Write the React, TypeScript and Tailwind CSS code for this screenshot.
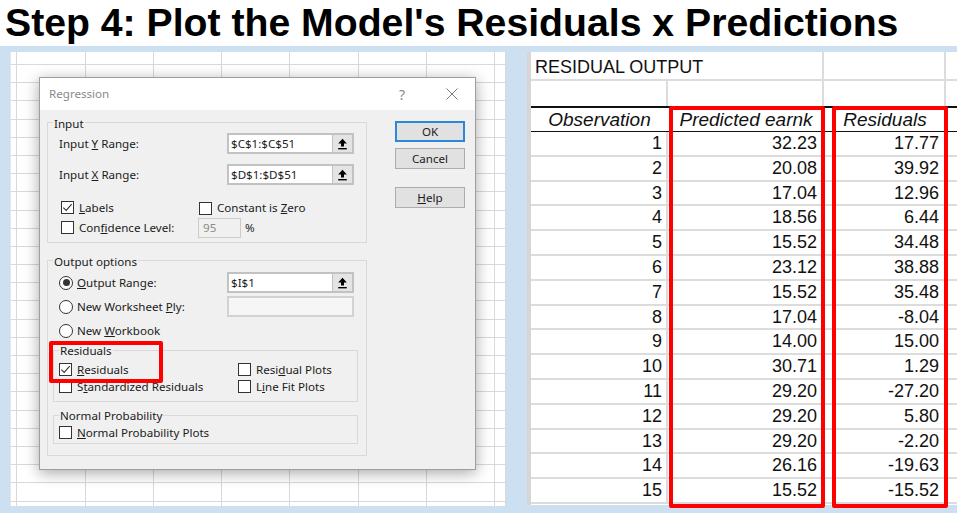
import React from 'react';

const predicted = ["32.23","20.08","17.04","18.56","15.52","23.12","15.52","17.04","14.00","30.71","29.20","29.20","29.20","26.16","15.52"];
const residuals = ["17.77","39.92","12.96","6.44","34.48","38.88","35.48","-8.04","15.00","1.29","-27.20","5.80","-2.20","-19.63","-15.52"];

function Check({ checked }: { checked?: boolean }) {
  return (
    <span className="w-[13px] h-[13px] border border-[#333] bg-white flex items-center justify-center shrink-0">
      {checked && (
        <svg width="11" height="11" viewBox="0 0 11 11">
          <path d="M1.3 5.6 L4.2 8.4 L9.7 2.2" fill="none" stroke="#333" strokeWidth="1.1" />
        </svg>
      )}
    </span>
  );
}

function Radio({ checked }: { checked?: boolean }) {
  return (
    <span className="w-[14px] h-[14px] rounded-full border border-[#333] bg-white flex items-center justify-center shrink-0">
      {checked && <span className="w-[7px] h-[7px] rounded-full bg-[#333]" />}
    </span>
  );
}

function UpArrow() {
  return (
    <svg width="11" height="12" viewBox="0 0 11 12">
      <path d="M5.5 0.8 L9.8 5.4 L7 5.4 L7 8.6 L4 8.6 L4 5.4 L1.2 5.4 Z" fill="#000" />
      <rect x="1.2" y="10" width="8.6" height="1.4" fill="#000" />
    </svg>
  );
}

function RefEdit({ value, disabled }: { value?: string; disabled?: boolean }) {
  return (
    <div className={disabled ? "h-[21px] w-[127px] flex border-2 border-[#d2d2d2] bg-[#f6f6f6]" : "h-[21px] w-[127px] flex border-2 border-[#c2c2c2] bg-white"}>
      <span className="flex-1 pl-[2px] leading-[17px] text-[11.6px] text-[#1b1b1b]">{value}</span>
      {!disabled && (
        <span className="w-[20px] bg-[#e4e4e4] border-l border-[#c2c2c2] flex items-center justify-center">
          <UpArrow />
        </span>
      )}
    </div>
  );
}

function Group({ label, className, labelClass, children }: { label: string; className: string; labelClass: string; children: React.ReactNode }) {
  return (
    <div className={"relative border border-[#d9d9d9] " + className}>
      <span className={"absolute left-[5px] px-[1px] bg-[#f0f0f0] leading-[16px] whitespace-nowrap " + labelClass}>{label}</span>
      {children}
    </div>
  );
}

function Btn({ children, primary, className }: { children: React.ReactNode; primary?: boolean; className: string }) {
  return (
    <div className={(primary ? "border-2 border-[#2b87da] " : "border border-[#adadad] ") + "w-[70px] h-[21px] bg-[#e1e1e1] flex items-center justify-center " + className}>
      {children}
    </div>
  );
}

function Dialog() {
  return (
    <div className="absolute left-[28px] top-[25px] w-[437px] h-[393px] bg-[#f0f0f0] border border-[#9e9e9e] shadow-[0_3px_14px_rgba(0,0,0,0.35)] flex flex-col font-['Noto_Sans','Open_Sans',sans-serif] text-[11.6px] text-[#1b1b1b]">
      <div className="h-[32px] bg-white flex items-center pl-[9px] pr-[17px] shrink-0">
        <span className="text-[#8a8a8a]">Regression</span>
        <span className="ml-auto text-[#8a8a8a] text-[14px] mr-[41px]">?</span>
        <svg width="12" height="12" viewBox="0 0 12 12">
          <path d="M0.5 0.5L11.5 11.5M11.5 0.5L0.5 11.5" stroke="#7a7a7a" strokeWidth="1" />
        </svg>
      </div>
      <div className="flex pl-[7px]">
        <div className="w-[320px] flex flex-col">
          <Group label="Input" className="w-[320px] h-[121px] mt-[12px]" labelClass="top-[-7px]">
            <div className="flex flex-col pt-[10px]">
              <div className="flex items-center h-[21px] pl-[11px]">
                <span className="w-[168px]">Input <u>Y</u> Range:</span>
                <RefEdit value="$C$1:$C$51" />
              </div>
              <div className="flex items-center h-[21px] pl-[11px] mt-[10px]">
                <span className="w-[168px]">Input <u>X</u> Range:</span>
                <RefEdit value="$D$1:$D$51" />
              </div>
              <div className="flex items-center h-[20px] pl-[13px] mt-[13px]">
                <div className="w-[138px] flex items-center">
                  <Check checked />
                  <span className="ml-[5px]"><u>L</u>abels</span>
                </div>
                <Check />
                <span className="ml-[5px]">Constant is <u>Z</u>ero</span>
              </div>
              <div className="flex items-center h-[20px] pl-[13px]">
                <div className="w-[137px] flex items-center">
                  <Check />
                  <span className="ml-[5px]">Con<u>f</u>idence Level:</span>
                </div>
                <div className="w-[43px] h-[20px] border border-[#cccccc] bg-[#f0f0f0] text-[#8a8a8a] pl-[4px] leading-[18px]">95</div>
                <span className="ml-[4px]">%</span>
              </div>
            </div>
          </Group>
          <Group label="Output options" className="w-[320px] h-[196px] mt-[17px]" labelClass="top-[-7px]">
            <div className="flex flex-col pt-[11px]">
              <div className="flex items-center h-[21px] pl-[11px]">
                <Radio checked />
                <span className="ml-[4px] w-[150px]"><u>O</u>utput Range:</span>
                <RefEdit value="$I$1" />
              </div>
              <div className="flex items-center h-[21px] pl-[11px] mt-[3px]">
                <Radio />
                <span className="ml-[4px] w-[150px]">New Worksheet <u>P</u>ly:</span>
                <RefEdit disabled />
              </div>
              <div className="flex items-center h-[20px] pl-[11px] mt-[4px]">
                <Radio />
                <span className="ml-[4px]">New <u>W</u>orkbook</span>
              </div>
              <Group label="Residuals" className="w-[305px] h-[52px] mt-[9px] ml-[5px]" labelClass="top-[-8px]">
                <div className="flex flex-col pt-[10px]">
                  <div className="flex items-center h-[17px] pl-[5px]">
                    <Check checked />
                    <span className="ml-[5px] w-[161px]"><u>R</u>esiduals</span>
                    <Check />
                    <span className="ml-[5px]">Resi<u>d</u>ual Plots</span>
                  </div>
                  <div className="flex items-center h-[17px] pl-[5px]">
                    <Check />
                    <span className="ml-[5px] w-[161px]">S<u>t</u>andardized Residuals</span>
                    <Check />
                    <span className="ml-[5px]">L<u>i</u>ne Fit Plots</span>
                  </div>
                </div>
              </Group>
              <Group label="Normal Probability" className="w-[305px] h-[29px] mt-[13px] ml-[5px]" labelClass="top-[-8px]">
                <div className="flex items-center h-[17px] pl-[5px] mt-[8px]">
                  <Check />
                  <span className="ml-[5px]"><u>N</u>ormal Probability Plots</span>
                </div>
              </Group>
            </div>
          </Group>
        </div>
        <div className="ml-[28px] flex flex-col">
          <Btn primary className="mt-[11px]">OK</Btn>
          <Btn className="mt-[6px]">Cancel</Btn>
          <Btn className="mt-[18px]"><span><u>H</u>elp</span></Btn>
        </div>
      </div>
      <div className="absolute left-[9px] top-[263px] w-[114px] h-[42px] border-4 border-[#ff0000] rounded-[2px]" />
    </div>
  );
}

const colWidths = ["w-[6px]", "w-[69px]", "w-[68px]", "w-[68px]", "w-[68px]", "w-[69px]", "w-[68px]", "w-[68px]", "flex-1"];
const rowHeights = ["h-[13px]", ...Array.from({ length: 25 }, () => "h-[18.2px]")];

function LeftPanel() {
  return (
    <div className="relative w-[496px] h-[454px] bg-white overflow-hidden border-l border-[#e4e4e4]">
      <div className="flex flex-col">
        {rowHeights.map((h, r) => (
          <div key={r} className={"flex shrink-0 " + h}>
            {colWidths.map((w, c) => (
              <div key={c} className={"border-r border-b border-[#d9d9d9] shrink-0 " + w} />
            ))}
          </div>
        ))}
      </div>
      <Dialog />
    </div>
  );
}

function RightPanel() {
  return (
    <div className="relative w-[430px] h-[453px] bg-white flex text-[#111] font-['Liberation_Sans',Arial,sans-serif]">
      <div className="w-[4px] h-full border-l-2 border-r-2 border-[#d6d6d6] shrink-0" />
      <div className="flex-1 flex flex-col">
        <div className="flex h-[29px] border-b-2 border-[#dcdcdc] shrink-0">
          <div className="w-[293px] border-r-2 border-[#dcdcdc] pl-[4px] pt-[3px] text-[18px] leading-[24px] whitespace-nowrap">RESIDUAL OUTPUT</div>
          <div className="w-[122px] border-r-2 border-[#dcdcdc]" />
          <div className="flex-1" />
        </div>
        <div className="flex h-[27px] border-b-2 border-[#111] shrink-0">
          <div className="w-[137px] border-r-2 border-[#dcdcdc]" />
          <div className="w-[156px] border-r-2 border-[#dcdcdc]" />
          <div className="w-[122px] border-r-2 border-[#dcdcdc]" />
          <div className="flex-1" />
        </div>
        <div className="flex h-[24px] border-b border-[#111] shrink-0 italic text-[19px] leading-[23px]">
          <div className="w-[137px] text-center">Observation</div>
          <div className="w-[156px] text-center">Predicted earnk</div>
          <div className="w-[122px] text-center">Residuals</div>
          <div className="flex-1 border-l-2 border-[#dcdcdc]" />
        </div>
        {predicted.map((p, i) => (
          <div key={i} className="flex h-[24.8px] border-b-2 border-[#dcdcdc] shrink-0 text-[18px] leading-[23px]">
            <div className="w-[137px] border-r-2 border-[#dcdcdc] text-right pr-[4px]">{i + 1}</div>
            <div className="w-[156px] border-r-2 border-[#dcdcdc] text-right pr-[5px]">{p}</div>
            <div className="w-[122px] border-r-2 border-[#dcdcdc] text-right pr-[5px]">{residuals[i]}</div>
            <div className="flex-1" />
          </div>
        ))}
      </div>
      <div className="absolute left-[142px] top-[54px] w-[156px] h-[402px] border-4 border-[#ff0000] rounded-[2px]" />
      <div className="absolute left-[305px] top-[54px] w-[116px] h-[402px] border-4 border-[#ff0000] rounded-[2px]" />
    </div>
  );
}

export default function App() {
  return (
    <div className="w-[957px] h-[513px] bg-white overflow-hidden flex flex-col font-['Liberation_Sans',Arial,sans-serif]">
      <div className="h-[46px] shrink-0 pl-[5px] text-[39.2px] font-bold leading-[46px] text-black whitespace-nowrap">
        Step 4: Plot the Model's Residuals x Predictions
      </div>
      <div className="flex-1 bg-[#cde0f2] flex pt-[6px] pl-[10px] gap-[21px]">
        <LeftPanel />
        <RightPanel />
      </div>
    </div>
  );
}
